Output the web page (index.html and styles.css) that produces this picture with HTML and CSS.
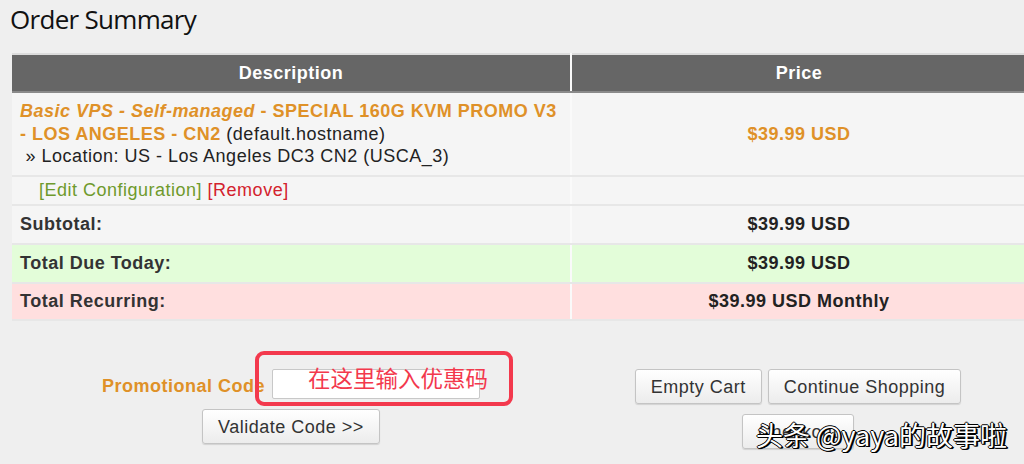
FILE: index.html
```html
<!DOCTYPE html>
<html lang="en">
<head>
<meta charset="utf-8">
<title>Order Summary</title>
<link rel="stylesheet" href="styles.css">
</head>
<body>
<div class="page">
  <h1 class="title">Order Summary</h1>
  <table class="cart">
    <thead>
      <tr>
        <th class="col-desc">Description</th>
        <th class="col-price">Price</th>
      </tr>
    </thead>
    <tbody>
      <tr class="item">
        <td class="desc">
          <span class="prod"><em>Basic VPS - Self-managed</em> - SPECIAL 160G KVM PROMO V3 - LOS ANGELES - CN2</span> (default.hostname)<br>
          &nbsp;» Location: US - Los Angeles DC3 CN2 (USCA_3)
        </td>
        <td class="price prod">$39.99 USD</td>
      </tr>
      <tr class="actions">
        <td class="links"><a class="edit">[Edit Configuration]</a> <a class="remove">[Remove]</a></td>
        <td></td>
      </tr>
      <tr class="sum">
        <td class="label">Subtotal:</td>
        <td class="price">$39.99 USD</td>
      </tr>
      <tr class="sum due">
        <td class="label">Total Due Today:</td>
        <td class="price">$39.99 USD</td>
      </tr>
      <tr class="sum recurring">
        <td class="label">Total Recurring:</td>
        <td class="price">$39.99 USD Monthly</td>
      </tr>
    </tbody>
  </table>

  <div class="bottom">
    <div class="promo">
      <div class="promo-row">
        <label class="promo-label">Promotional Code</label>
        <input class="promo-input" type="text">
      </div>
      <button class="btn">Validate Code &gt;&gt;</button>
      <div class="annotation">
        <span class="annotation-text">在这里输入优惠码</span>
      </div>
    </div>
    <div class="cart-actions">
      <div class="btn-row">
        <button class="btn">Empty Cart</button>
        <button class="btn">Continue Shopping</button>
      </div>
      <button class="btn">Checkout</button>
      <div class="watermark">头条 @yaya的故事啦</div>
    </div>
  </div>
</div>
</body>
</html>
```

FILE: styles.css
```css
html, body {
  margin: 0;
  padding: 0;
  background: #efefef;
  overflow: hidden;
}

.page {
  width: 1024px;
  height: 464px;
  position: relative;
  font-family: "Liberation Sans", Arial, sans-serif;
  color: #222;
}

.title {
  margin: 0;
  padding: 2px 0 0 10px;
  height: 53px;
  box-sizing: border-box;
  font-family: "Open Sans", "Liberation Sans", sans-serif;
  font-weight: 400;
  font-size: 26px;
  line-height: 34px;
  letter-spacing: -0.7px;
  color: #111;
}

.cart {
  margin-left: 12px;
  width: 1014px;
  border-collapse: collapse;
  table-layout: fixed;
  font-size: 18px;
  letter-spacing: 0.5px;
}

.cart th {
  background: #666;
  color: #fff;
  font-weight: 700;
  height: 36px;
  padding: 0;
  text-align: center;
  border-bottom: 2px solid #8a8a8a;
  border-top: 2px solid #dcdcdc;
}

.col-desc {
  width: 558px;
  border-right: 2px solid #fafafa;
}

.cart td {
  background: #f5f5f5;
  border-bottom: 2px solid #e7e7e7;
  padding: 0 8px;
}

.cart td:first-child {
  border-right: 2px solid #fafafa;
}

.cart td.desc {
  padding-right: 2px;
}

.item td {
  height: 66px;
  padding-top: 7px;
  padding-bottom: 7px;
  line-height: 22.5px;
}

.prod {
  color: #df9128;
  font-weight: 700;
}

.prod em {
  font-style: italic;
}

.price {
  text-align: center;
}

.actions td {
  height: 27px;
  line-height: 27px;
}

.cart td.links {
  padding-left: 27px;
}

.edit {
  color: #6f9a2c;
}

.remove {
  color: #d3222d;
}

.sum td {
  height: 37px;
  font-weight: 700;
  color: #333;
}

.sum .price {
  color: #222;
}

.due td {
  background: #e3fdd9;
}

.recurring td {
  background: #ffdfdf;
  height: 35px;
}

.bottom {
  display: grid;
  grid-template-columns: 558px 456px;
  margin-left: 12px;
  padding-top: 48px;
}

.promo,
.cart-actions {
  position: relative;
  display: flex;
  flex-direction: column;
  align-items: center;
  gap: 10px;
}

.promo-row {
  display: flex;
  align-items: center;
  gap: 7px;
  height: 30px;
}

.promo-label {
  color: #df9128;
  font-weight: 700;
  font-size: 18px;
  letter-spacing: 0.5px;
  padding-top: 5px;
}

.promo-input {
  width: 208px;
  height: 30px;
  box-sizing: border-box;
  border: 1px solid #c8c8c8;
  border-radius: 2px;
  background: #fff;
  margin: 0;
}

.btn-row {
  display: flex;
  gap: 6px;
}

.btn {
  font-family: "Liberation Sans", Arial, sans-serif;
  font-size: 18px;
  letter-spacing: 0.5px;
  line-height: 20px;
  color: #333;
  padding: 7px 15px;
  height: 35px;
  background: linear-gradient(#ffffff, #ececec);
  border: 1px solid #c4c4c4;
  border-radius: 3px;
  box-shadow: 0 1px 1px rgba(0,0,0,0.12);
  margin: 0;
}

.annotation {
  position: absolute;
  left: 243px;
  top: -18px;
  width: 258px;
  height: 55px;
  box-sizing: border-box;
  border: 4px solid #f3394d;
  border-radius: 9px;
}

.annotation-text {
  position: absolute;
  left: 49px;
  top: 8px;
  font-family: "Noto Sans CJK SC", sans-serif;
  font-size: 22.5px;
  line-height: 28px;
  color: #f3394d;
}

.watermark {
  position: absolute;
  left: 186px;
  top: 51px;
  font-family: "Noto Sans CJK SC", sans-serif;
  font-size: 27px;
  line-height: 30px;
  color: #fff;
  white-space: nowrap;
  text-shadow: 1px 1px 0 #000, 2px 1px 0 #000, -1px 0 0 #000, 0 -1px 0 #000, 1px 0 0 #000, 0 1px 0 #000;
}
```
